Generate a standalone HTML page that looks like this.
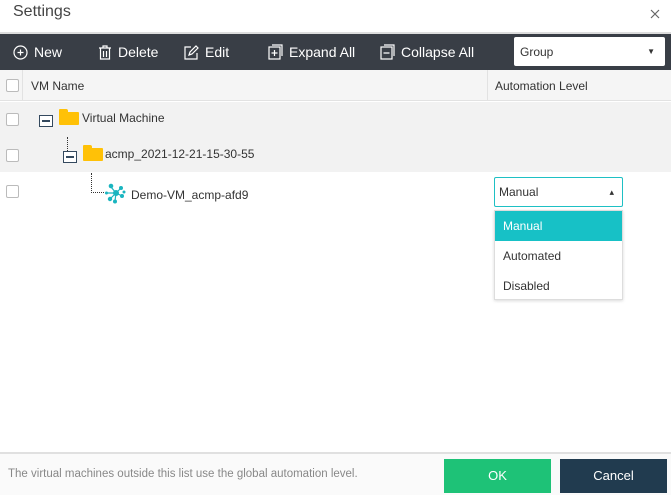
<!DOCTYPE html><html><head><style>
*{box-sizing:border-box;margin:0;padding:0}
body{width:671px;height:495px;overflow:hidden;background:#fff;font-family:"Liberation Sans",sans-serif;position:relative;color:#333}
.a{position:absolute}
.cb{position:absolute;left:6px;width:13px;height:13px;border:1px solid #bbb;border-radius:2px;background:#fff}
.tb{color:#fff;font-size:14px;top:44px;display:flex;align-items:center;gap:6px}
.mn{position:absolute;width:14px;height:12px;border:1.5px solid #34495e;background:#fff}
.mn:after{content:"";position:absolute;left:2px;right:2px;top:4px;height:1.5px;background:#34495e}
.fold{position:absolute;width:20px;height:13px;background:#ffc107;border-radius:1px}
.fold:before{content:"";position:absolute;left:0;top:-3px;width:9px;height:4px;background:#ffc107;border-radius:1px 2px 0 0}
</style></head><body>
<div class="a" style="left:13px;top:3px;font-size:16px;color:#444">Settings</div>
<svg class="a" style="left:650px;top:9px" width="10" height="10"><path d="M1 1L9 9M9 1L1 9" stroke="#666" stroke-width="1.2"/></svg>
<div class="a" style="left:0;top:32px;width:671px;height:2px;background:#ddd"></div>
<div class="a" style="left:0;top:34px;width:671px;height:36px;background:#393e46"></div>
<div class="a tb" style="left:13px"><svg width="15" height="15"><circle cx="7.5" cy="7.5" r="6.5" fill="none" stroke="#fff" stroke-width="1.2"/><path d="M7.5 4.5v6M4.5 7.5h6" stroke="#fff" stroke-width="1.2"/></svg>New</div>
<div class="a tb" style="left:98px"><svg width="14" height="15"><path d="M1 3h12M5 3V1h4v2M2.5 3v11h9V3M5.5 6v6M8.5 6v6" fill="none" stroke="#fff" stroke-width="1.2"/></svg>Delete</div>
<div class="a tb" style="left:184px"><svg width="15" height="15"><path d="M13 8v6H1V2h6M5 10l1-3 6-6 2 2-6 6z" fill="none" stroke="#fff" stroke-width="1.2"/></svg>Edit</div>
<div class="a tb" style="left:268px"><svg width="15" height="16"><rect x="1" y="3" width="11" height="12" fill="none" stroke="#fff" stroke-width="1.2"/><path d="M4 1h10v11M6.5 6v6M3.5 9h6" fill="none" stroke="#fff" stroke-width="1.2"/></svg>Expand All</div>
<div class="a tb" style="left:380px"><svg width="15" height="16"><rect x="1" y="3" width="11" height="12" fill="none" stroke="#fff" stroke-width="1.2"/><path d="M4 1h10v11M3.5 9h6" fill="none" stroke="#fff" stroke-width="1.2"/></svg>Collapse All</div>
<div class="a" style="left:514px;top:37px;width:151px;height:29px;background:#fff;border-radius:2px;font-size:12px;padding:8px 6px">Group<span style="position:absolute;right:10px;top:10px;font-size:8px">▼</span></div>
<div class="a" style="left:0;top:70px;width:671px;height:31px;background:#f5f5f5;border-bottom:1px solid #e2e2e2"></div>
<div class="a" style="left:22px;top:70px;width:1px;height:31px;background:#e2e2e2"></div>
<div class="a" style="left:487px;top:70px;width:1px;height:31px;background:#e2e2e2"></div>
<div class="cb" style="top:79px"></div>
<div class="a" style="left:31px;top:79px;font-size:12px">VM Name</div>
<div class="a" style="left:495px;top:79px;font-size:12px">Automation Level</div>
<div class="a" style="left:0;top:102px;width:671px;height:70px;background:#f2f2f2"></div>
<div class="cb" style="top:113px"></div>
<div class="cb" style="top:149px"></div>
<div class="cb" style="top:185px"></div>
<div class="mn" style="left:39px;top:115px"></div>
<div class="fold" style="left:59px;top:112px"></div>
<div class="a" style="left:82px;top:111px;font-size:12px">Virtual Machine</div>
<div class="a" style="left:67px;top:137px;height:14px;border-left:1px dotted #333"></div>
<div class="mn" style="left:63px;top:151px"></div>
<div class="fold" style="left:83px;top:148px"></div>
<div class="a" style="left:105px;top:147px;font-size:12px">acmp_2021-12-21-15-30-55</div>
<div class="a" style="left:91px;top:173px;width:13px;height:20px;border-left:1px dotted #333;border-bottom:1px dotted #333"></div>
<svg class="a" style="left:104px;top:182px" width="24" height="22"><g stroke="#1ab5c0" stroke-width="1.2"><path d="M12 11L7 5M12 11L17 6M12 11L6 17M12 11L18 14M12 11L3 11M12 11L11 19"/></g><g fill="#1ab5c0"><circle cx="12" cy="11" r="3"/><circle cx="7" cy="4" r="2.3"/><circle cx="17" cy="6" r="2"/><circle cx="6" cy="17" r="2.2"/><circle cx="18" cy="14" r="2"/><circle cx="2.5" cy="11" r="1.5"/><circle cx="11" cy="19.5" r="2"/><circle cx="20" cy="10" r="1.5"/></g></svg>
<div class="a" style="left:131px;top:188px;font-size:12px">Demo-VM_acmp-afd9</div>
<div class="a" style="left:494px;top:177px;width:129px;height:30px;border:1px solid #1ec0c4;border-radius:2px;font-size:12px;padding:7px 4px">Manual<span style="position:absolute;right:8px;top:9px;font-size:9px">▴</span></div>
<div class="a" style="left:494px;top:210px;width:129px;height:90px;border:1px solid #ddd;background:#fff;box-shadow:0 1px 3px rgba(0,0,0,.15);font-size:12px">
<div style="height:30px;background:#17c1c6;color:#fff;padding:8px 8px">Manual</div>
<div style="height:30px;padding:8px 8px">Automated</div>
<div style="height:30px;padding:8px 8px">Disabled</div></div>
<div class="a" style="left:0;top:452px;width:671px;height:43px;background:#fafafa;border-top:2px solid #e0e0e0"></div>
<div class="a" style="left:8px;top:468px;font-size:11.5px;color:#888">The virtual machines outside this list use the global automation level.</div>
<div class="a" style="left:444px;top:459px;width:107px;height:34px;background:#1ec277;color:#fff;font-size:13px;text-align:center;line-height:34px">OK</div>
<div class="a" style="left:560px;top:459px;width:107px;height:34px;background:#213b4f;color:#fff;font-size:13px;text-align:center;line-height:34px">Cancel</div>
</body></html>
